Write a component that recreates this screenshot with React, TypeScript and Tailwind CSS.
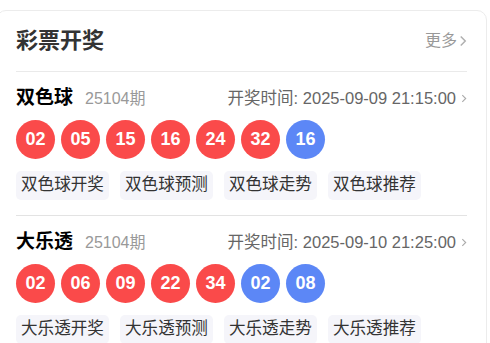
import React from "react";

const cjk = { fontFamily: '"Liberation Sans", "Noto Sans CJK SC", sans-serif' };

type Lottery = {
  name: string;
  issue: string;
  time: string;
  balls: { n: string; blue?: boolean }[];
};

const data: Lottery[] = [
  {
    name: "双色球",
    issue: "25104期",
    time: "2025-09-09 21:15:00",
    balls: [
      { n: "02" },
      { n: "05" },
      { n: "15" },
      { n: "16" },
      { n: "24" },
      { n: "32" },
      { n: "16", blue: true },
    ],
  },
  {
    name: "大乐透",
    issue: "25104期",
    time: "2025-09-10 21:25:00",
    balls: [
      { n: "02" },
      { n: "06" },
      { n: "09" },
      { n: "22" },
      { n: "34" },
      { n: "02", blue: true },
      { n: "08", blue: true },
    ],
  },
];

function Chevron({ className }: { className?: string }) {
  return (
    <svg viewBox="0 0 10 16" className={className} fill="none" stroke="currentColor" strokeWidth="2">
      <path d="M2 2l6 6-6 6" />
    </svg>
  );
}

function Section({ item, last }: { item: Lottery; last?: boolean }) {
  return (
    <div className={last ? "pt-[13px]" : "pt-[13px] pb-[15px] border-b border-[#e3e3e3]"}>
      {/* header row */}
      <div className="flex items-center justify-between h-[26px]">
        <div className="flex items-baseline">
          <span className="text-[19px] font-bold text-black">{item.name}</span>
          <span className="ml-[12px] text-[16px] text-[#999]">{item.issue}</span>
        </div>
        <div className="flex items-center text-[16.5px] text-[#666]">
          <span>开奖时间: {item.time}</span>
          <Chevron className="w-[6px] h-[9px] ml-[5px] text-[#aaa]" />
        </div>
      </div>

      {/* balls */}
      <div className="flex gap-[6px] mt-[9px]">
        {item.balls.map((b, i) => (
          <div
            key={i}
            className={
              "w-[39px] h-[39px] rounded-full flex items-center justify-center text-white font-bold text-[18px] " +
              (b.blue ? "bg-[#5c87f6]" : "bg-[#fa4a4a]")
            }
          >
            {b.n}
          </div>
        ))}
      </div>

      {/* tags */}
      <div className="flex gap-[11px] mt-[12px]">
        {["开奖", "预测", "走势", "推荐"].map((t) => (
          <div
            key={t}
            className="h-[29px] px-[5px] flex items-center rounded-[5px] bg-[#f5f5fa] text-[16.6px] text-[#333]"
          >
            {item.name}
            {t}
          </div>
        ))}
      </div>
    </div>
  );
}

export default function App() {
  return (
    <div className="w-[490px] h-[343px] bg-white overflow-hidden" style={cjk}>
      <div className="mt-[10px] ml-[-4px] w-[491px] border border-[#ececec] rounded-[10px] pl-[19px] pr-[19px] pt-[14px] pb-[20px]">
        {/* Heading */}
        <div className="flex items-center justify-between h-[32px] pb-[1px]">
          <h2 className="text-[22px] font-bold text-[#333]">彩票开奖</h2>
          <div className="flex items-center text-[16px] text-[#999]">
            更多
            <Chevron className="w-[8px] h-[12px] ml-[2px] text-[#b0b0b0]" />
          </div>
        </div>
        <div className="mt-[14px] border-b border-[#eaeaea]" />

        {data.map((d, i) => (
          <Section key={d.name} item={d} last={i === data.length - 1} />
        ))}
      </div>
    </div>
  );
}
